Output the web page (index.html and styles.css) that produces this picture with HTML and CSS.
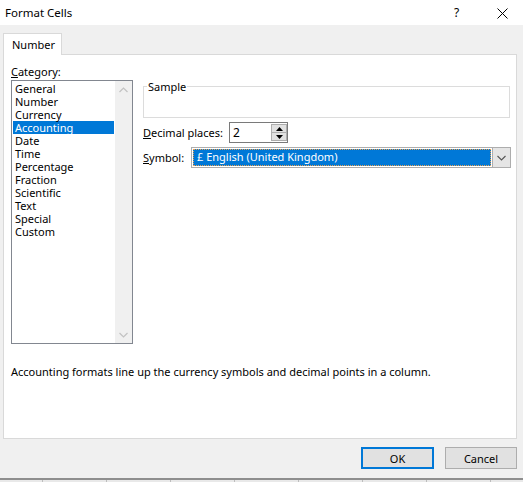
FILE: index.html
```html
<!DOCTYPE html>
<html>
<head>
<meta charset="utf-8">
<link rel="stylesheet" href="styles.css">
</head>
<body>
<div class="window">
  <div class="titlebar">
    <span class="title">Format Cells</span>
    <span class="help">?</span>
    <span class="close"><svg width="11" height="11" viewBox="0 0 11 11"><path d="M0.5 0.5L10.5 10.5M10.5 0.5L0.5 10.5" stroke="#000" stroke-width="1"/></svg></span>
  </div>
  <div class="tabs"><div class="tab">Number</div></div>
  <div class="panel">
    <div class="cols">
      <div class="left">
        <div class="lbl"><u>C</u>ategory:</div>
        <div class="listbox">
          <div class="items">
            <div class="item">General</div>
            <div class="item">Number</div>
            <div class="item">Currency</div>
            <div class="item sel">Accounting</div>
            <div class="item">Date</div>
            <div class="item">Time</div>
            <div class="item">Percentage</div>
            <div class="item">Fraction</div>
            <div class="item">Scientific</div>
            <div class="item">Text</div>
            <div class="item">Special</div>
            <div class="item">Custom</div>
          </div>
          <div class="vscroll">
            <svg width="9" height="6" viewBox="0 0 9 6"><path d="M0.5 5L4.5 1L8.5 5" fill="none" stroke="#c2c2c2" stroke-width="1.2"/></svg>
            <svg width="9" height="6" viewBox="0 0 9 6"><path d="M0.5 1L4.5 5L8.5 1" fill="none" stroke="#c2c2c2" stroke-width="1.2"/></svg>
          </div>
        </div>
      </div>
      <div class="right">
        <fieldset class="sample"><legend>Sample</legend></fieldset>
        <div class="row dec">
          <span class="rlbl"><u>D</u>ecimal places:</span>
          <div class="spin">
            <div class="spinval">2</div>
            <div class="spinbtns">
              <div class="sb"><svg width="7" height="4" viewBox="0 0 7 4"><path d="M0 4L3.5 0L7 4Z" fill="#000"/></svg></div>
              <div class="sb"><svg width="7" height="4" viewBox="0 0 7 4"><path d="M0 0L3.5 4L7 0Z" fill="#000"/></svg></div>
            </div>
          </div>
        </div>
        <div class="row sym">
          <span class="rlbl"><u>S</u>ymbol:</span>
          <div class="combo">
            <div class="comboval"><span class="hl">£ English (United Kingdom)</span></div>
            <div class="combobtn"><svg width="9" height="6" viewBox="0 0 9 6"><path d="M0.5 1L4.5 5L8.5 1" fill="none" stroke="#555" stroke-width="1.1"/></svg></div>
          </div>
        </div>
      </div>
    </div>
    <div class="desc">Accounting formats line up the currency symbols and decimal points in a column.</div>
  </div>
  <div class="footer">
    <div class="btn ok">OK</div>
    <div class="btn">Cancel</div>
  </div>
  <div class="sheet">
    <div class="cell first"></div><div class="cell"></div><div class="cell"></div><div class="cell"></div><div class="cell"></div><div class="cell"></div><div class="cell"></div><div class="cell"></div>
  </div>
</div>
</body>
</html>
```
FILE: styles.css
```css
* { box-sizing: border-box; }
html, body { margin: 0; padding: 0; }
body {
  width: 523px; height: 482px; overflow: hidden;
  background: #f0f0f0;
  font-family: "Noto Sans", "Open Sans", sans-serif;
  font-size: 11px; color: #000;
}
u { text-decoration: underline; text-underline-offset: 1px; }
.window { width: 523px; height: 482px; display: flex; flex-direction: column; overflow: hidden; }
.titlebar {
  height: 25px; background: #fff; display: flex; align-items: center;
  padding-left: 5px;
}
.title { flex: 1; font-size: 11.5px; }
.help { width: 43px; font-size: 12px; }
.close { width: 26px; display: flex; align-items: center; padding-top: 1px; }
.tabs { padding: 8px 0 0 3px; height: 30px; display: flex; }
.tab {
  width: 59px; height: 22px; background: #fff;
  border: 1px solid #d9d9d9; border-bottom: none;
  padding: 4px 0 0 8px; position: relative; z-index: 1; line-height: 14px;
}
.panel {
  margin-left: 3px; width: 514px; height: 385px; margin-top: -1px;
  background: #fff; border: 1px solid #d9d9d9;
  padding: 9px 7px 0 7px;
}
.cols { display: grid; grid-template-columns: 122px 1fr; column-gap: 10px; }
.lbl { height: 16px; line-height: 15px; }
.listbox {
  height: 264px; border: 1px solid #828790; display: flex;
}
.items { flex: 1; padding: 1px 1px 0 1px; }
.item { height: 13px; line-height: 13px; padding-left: 2px; white-space: nowrap; }
.item.sel { background: #0078d7; color: #fff; }
.vscroll {
  width: 17px; background: #f0f0f0; display: flex; flex-direction: column;
  justify-content: space-between; align-items: center; padding: 6px 0 5px 0;
}
.right { padding-top: 16px; }
.sample {
  margin: 0; height: 38px; width: 367px; border: 1px solid #dcdcdc;
  padding: 0;
}
.sample legend { padding: 0 1px; margin-left: 3px; line-height: 13px; }
.row { display: flex; align-items: center; }
.rlbl { width: 86px; white-space: nowrap; }
.dec { margin-top: 4px; height: 21px; }
.sym { margin-top: 4px; height: 21px; }
.sym .rlbl { width: 48px; }
.spin {
  width: 59px; height: 21px; border: 1px solid #7a7a7a; display: flex;
  background: #fff;
}
.spinval { flex: 1; padding-left: 3px; line-height: 19px; font-size: 12px; }
.spinbtns { width: 16px; display: flex; flex-direction: column; padding: 1px 0; }
.sb {
  flex: 1; background: #e1e1e1; border: 1px solid #adadad;
  display: flex; align-items: center; justify-content: center;
}
.sb + .sb { border-top: none; }
.combo {
  width: 320px; height: 21px; border: 1px solid #adadad; background: #fff;
  display: flex;
}
.comboval { flex: 1; padding: 1px; display: flex; }
.hl {
  flex: 1; background: #0078d7; color: #fff; line-height: 15px;
  padding-left: 4px; outline: 1px dotted #e8a050; outline-offset: -1px;
  white-space: nowrap;
}
.combobtn {
  width: 18px; background: #e5e5e5; border-left: 1px solid #adadad;
  display: flex; align-items: center; justify-content: center;
}
.desc { margin-top: 20px; line-height: 15px; white-space: nowrap; }
.footer {
  height: 39px; display: flex; justify-content: flex-end; gap: 11px;
  padding: 8px 6px 0 0;
}
.btn {
  width: 72px; height: 22px; background: #e1e1e1; border: 1px solid #adadad;
  display: flex; align-items: center; justify-content: center;
}
.btn.ok { width: 73px; border: 2px solid #0078d7; }
.sheet {
  flex: 1; border-top: 2px solid #8e8e8e; background: #e9e9e9; display: flex;
  overflow: hidden;
}
.cell { width: 64px; height: 100%; border-right: 1px solid #bdbdbd; flex: none; }
.cell.first { width: 43px; }
```
